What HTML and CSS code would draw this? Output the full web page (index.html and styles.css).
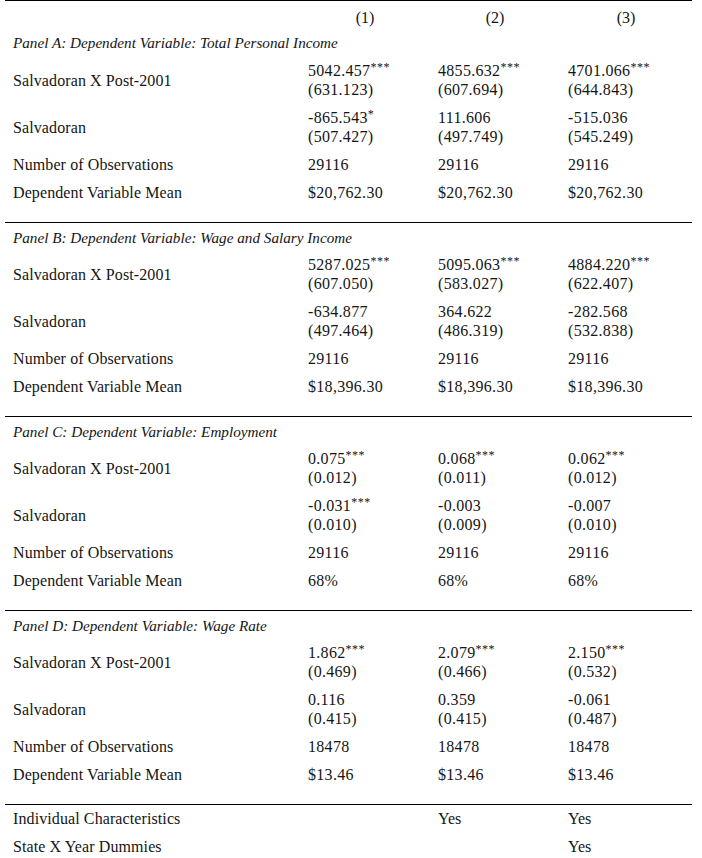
FILE: index.html
```html
<!DOCTYPE html>
<html>
<head>
<meta charset="utf-8">
<link rel="stylesheet" href="styles.css">
</head>
<body>
<table class="reg">
  <colgroup>
    <col class="c-label"><col class="c-num"><col class="c-num"><col class="c-num3">
  </colgroup>
  <thead>
    <tr class="head">
      <th></th><th>(1)</th><th>(2)</th><th>(3)</th>
    </tr>
  </thead>
  <tbody class="panel first">
    <tr class="title"><td colspan="4">Panel A: Dependent Variable: Total Personal Income</td></tr>
    <tr><td class="lab">Salvadoran X Post-2001</td><td>5042.457<sup>***</sup><br>(631.123)</td><td>4855.632<sup>***</sup><br>(607.694)</td><td>4701.066<sup>***</sup><br>(644.843)</td></tr>
    <tr><td class="lab">Salvadoran</td><td>-865.543<sup>*</sup><br>(507.427)</td><td>111.606<br>(497.749)</td><td>-515.036<br>(545.249)</td></tr>
    <tr><td class="lab">Number of Observations</td><td>29116</td><td>29116</td><td>29116</td></tr>
    <tr class="last"><td class="lab">Dependent Variable Mean</td><td>$20,762.30</td><td>$20,762.30</td><td>$20,762.30</td></tr>
  </tbody>
  <tbody class="panel">
    <tr class="title"><td colspan="4">Panel B: Dependent Variable: Wage and Salary Income</td></tr>
    <tr><td class="lab">Salvadoran X Post-2001</td><td>5287.025<sup>***</sup><br>(607.050)</td><td>5095.063<sup>***</sup><br>(583.027)</td><td>4884.220<sup>***</sup><br>(622.407)</td></tr>
    <tr><td class="lab">Salvadoran</td><td>-634.877<br>(497.464)</td><td>364.622<br>(486.319)</td><td>-282.568<br>(532.838)</td></tr>
    <tr><td class="lab">Number of Observations</td><td>29116</td><td>29116</td><td>29116</td></tr>
    <tr class="last"><td class="lab">Dependent Variable Mean</td><td>$18,396.30</td><td>$18,396.30</td><td>$18,396.30</td></tr>
  </tbody>
  <tbody class="panel">
    <tr class="title"><td colspan="4">Panel C: Dependent Variable: Employment</td></tr>
    <tr><td class="lab">Salvadoran X Post-2001</td><td>0.075<sup>***</sup><br>(0.012)</td><td>0.068<sup>***</sup><br>(0.011)</td><td>0.062<sup>***</sup><br>(0.012)</td></tr>
    <tr><td class="lab">Salvadoran</td><td>-0.031<sup>***</sup><br>(0.010)</td><td>-0.003<br>(0.009)</td><td>-0.007<br>(0.010)</td></tr>
    <tr><td class="lab">Number of Observations</td><td>29116</td><td>29116</td><td>29116</td></tr>
    <tr class="last"><td class="lab">Dependent Variable Mean</td><td>68%</td><td>68%</td><td>68%</td></tr>
  </tbody>
  <tbody class="panel">
    <tr class="title"><td colspan="4">Panel D: Dependent Variable: Wage Rate</td></tr>
    <tr><td class="lab">Salvadoran X Post-2001</td><td>1.862<sup>***</sup><br>(0.469)</td><td>2.079<sup>***</sup><br>(0.466)</td><td>2.150<sup>***</sup><br>(0.532)</td></tr>
    <tr><td class="lab">Salvadoran</td><td>0.116<br>(0.415)</td><td>0.359<br>(0.415)</td><td>-0.061<br>(0.487)</td></tr>
    <tr><td class="lab">Number of Observations</td><td>18478</td><td>18478</td><td>18478</td></tr>
    <tr class="last"><td class="lab">Dependent Variable Mean</td><td>$13.46</td><td>$13.46</td><td>$13.46</td></tr>
  </tbody>
  <tbody class="foot">
    <tr class="ftop"><td class="lab">Individual Characteristics</td><td></td><td class="yes">Yes</td><td class="yes">Yes</td></tr>
    <tr class="fbot"><td class="lab">State X Year Dummies</td><td></td><td></td><td class="yes">Yes</td></tr>
  </tbody>
</table>
</body>
</html>
```
FILE: styles.css
```css
html, body {
  margin: 0;
  padding: 0;
  background: #ffffff;
}
body {
  font-family: "Liberation Serif", "Times New Roman", serif;
  font-size: 16px;
  color: #151515;
}
.reg {
  margin-left: 5px;
  width: 687px;
  border-collapse: collapse;
  table-layout: fixed;
  border-top: 1px solid #000;
}
.c-label { width: 295px; }
.c-num { width: 130px; }
.c-num3 { width: 132px; }

.reg th {
  font-weight: normal;
  text-align: center;
  line-height: 19px;
  padding: 7px 0 1px;
}
.reg td {
  line-height: 19px;
  padding: 4px 0 5px 8px;
  vertical-align: middle;
  text-align: left;
  letter-spacing: 0.3px;
}
.reg td.lab {
  padding-left: 8px;
  letter-spacing: 0.1px;
}
.title td {
  font-style: italic;
  font-size: 15.2px;
  letter-spacing: 0;
  padding-top: 5px;
  padding-bottom: 4px;
}
.panel .title td {
  border-top: 1px solid #000;
}
.panel.first .title td {
  border-top: none;
  padding-top: 5px;
  padding-bottom: 5px;
}
.last td {
  padding-bottom: 20px;
}
.foot .ftop td {
  border-top: 1px solid #000;
  padding-top: 4px;
}
.foot .yes {
  letter-spacing: 0;
}
sup {
  font-size: 12px;
  line-height: 0;
  letter-spacing: 0.5px;
  vertical-align: 5px;
}
```
